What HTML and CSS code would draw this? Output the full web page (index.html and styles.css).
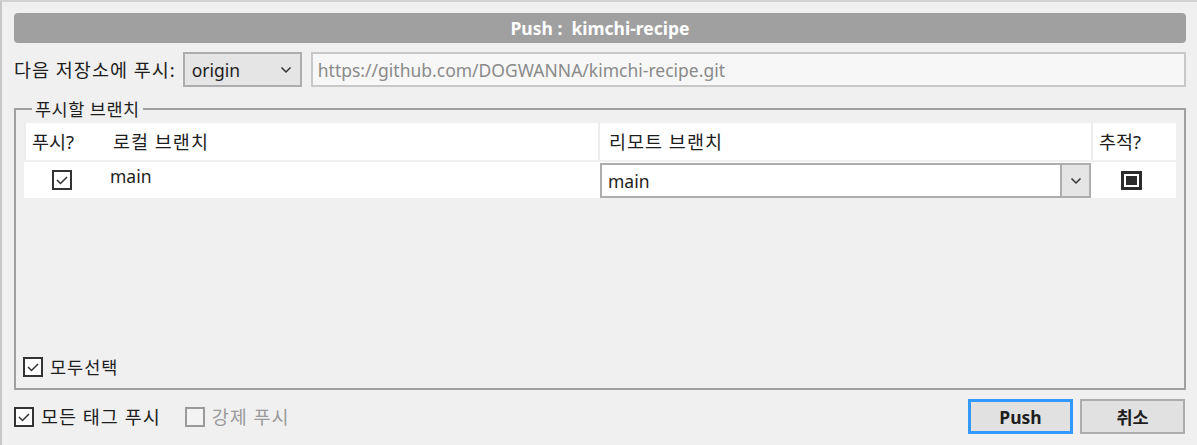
FILE: index.html
```html
<!DOCTYPE html>
<html lang="ko">
<head>
<meta charset="utf-8">
<title>Push : kimchi-recipe</title>
<link rel="stylesheet" href="styles.css">
</head>
<body>
<div class="window">
  <div class="title">Push :&nbsp; kimchi-recipe</div>

  <div class="remote-row">
    <span class="label ko">다음 저장소에 푸시:</span>
    <div class="select">
      <span>origin</span>
      <svg class="chev" width="12" height="8" viewBox="0 0 12 8"><polyline points="1.5,1.5 6,6 10.5,1.5" fill="none" stroke="#333" stroke-width="1.5"/></svg>
    </div>
    <div class="url">https://github.com/DOGWANNA/kimchi-recipe.git</div>
  </div>

  <fieldset class="group">
    <legend class="ko legend">푸시할 브랜치</legend>
    <div class="table">
      <div class="thead">
        <div class="th c1 ko">푸시?</div>
        <div class="th c2 ko">로컬 브랜치</div>
        <div class="th c3 ko">리모트 브랜치</div>
        <div class="th c4 ko">추적?</div>
      </div>
      <div class="trow">
        <div class="td c1">
          <span class="cb">
            <svg width="16" height="16" viewBox="0 0 16 16"><polyline points="3,8 6.5,11.5 13,5" fill="none" stroke="#333" stroke-width="1.5"/></svg>
          </span>
        </div>
        <div class="td c2"><span class="local">main</span></div>
        <div class="td c3">
          <div class="combo">
            <span class="combo-text">main</span>
            <span class="combo-btn">
              <svg width="12" height="8" viewBox="0 0 12 8"><polyline points="1.5,1.5 6,6 10.5,1.5" fill="none" stroke="#333" stroke-width="1.5"/></svg>
            </span>
          </div>
        </div>
        <div class="td c4"><span class="cb-ind"><span class="ind-fill"></span></span></div>
      </div>
    </div>
    <label class="check-all">
      <span class="cb">
        <svg width="16" height="16" viewBox="0 0 16 16"><polyline points="3,8 6.5,11.5 13,5" fill="none" stroke="#333" stroke-width="1.5"/></svg>
      </span>
      <span class="ko small">모두선택</span>
    </label>
  </fieldset>

  <div class="footer">
    <div class="options">
      <label class="opt">
        <span class="cb">
          <svg width="16" height="16" viewBox="0 0 16 16"><polyline points="3,8 6.5,11.5 13,5" fill="none" stroke="#333" stroke-width="1.5"/></svg>
        </span>
        <span class="ko">모든 태그 푸시</span>
      </label>
      <label class="opt disabled">
        <span class="cb cb-off"></span>
        <span class="ko">강제 푸시</span>
      </label>
    </div>
    <div class="buttons">
      <button class="btn btn-default">Push</button>
      <button class="btn">취소</button>
    </div>
  </div>
</div>
</body>
</html>
```

FILE: styles.css
```css
* { box-sizing: border-box; }

html, body {
  margin: 0;
  padding: 0;
  background: #f0f0f0;
}

body {
  font-family: "Noto Sans", "Noto Sans CJK KR", sans-serif;
  font-size: 17.5px;
  line-height: 20px;
  color: #1e1e1e;
}

.ko { font-size: 18.5px; letter-spacing: 1px; }
.ko.legend { font-size: 17.5px; letter-spacing: 0.5px; }
.ko.small { font-size: 17.5px; letter-spacing: 1px; }

.window {
  width: 1197px;
  height: 445px;
  border-top: 2px solid #d2d2d2;
  border-left: 2px solid #c8c8c8;
  padding: 11px 11px 0 12px;
  overflow: hidden;
}

.title {
  height: 30px;
  background: #a0a0a0;
  border-radius: 4px;
  color: #fff;
  font-weight: bold;
  font-size: 17.5px;
  line-height: 30px;
  text-align: center;
}

.remote-row {
  margin-top: 9px;
  height: 35px;
  display: flex;
  align-items: center;
}

.label { margin-right: 7px; white-space: nowrap; }

.select {
  width: 119px;
  height: 35px;
  border: 2px solid #adadad;
  background: #e5e5e5;
  display: flex;
  align-items: center;
  justify-content: space-between;
  padding: 0 8px 0 7px;
  margin-right: 9px;
  flex: none;
}

.url {
  flex: 1;
  height: 35px;
  border: 2px solid #c8c8c8;
  background: #f7f7f7;
  color: #8a8a8a;
  display: flex;
  align-items: center;
  padding-left: 5px;
}

.group {
  margin: 12px 0 0 0;
  border: 2px solid #a0a0a0;
  padding: 4px 8px 11px 8px;
  min-width: 0;
}

.group legend {
  padding: 0 3px;
  margin-left: 8px;
  line-height: 20px;
}

.table {
  height: 234px;
  display: flex;
  flex-direction: column;
  gap: 2px;
}

.thead, .trow {
  display: grid;
  grid-template-columns: 76px 498px 493px 84px;
  background: #fff;
}

.thead { height: 37px; }
.trow { height: 36px; }

.th {
  display: flex;
  align-items: center;
  padding-left: 9px;
  border-left: 2px solid #ececec;
}

.th.c1 { padding-left: 6px; letter-spacing: 0; }
.th.c2 { border-left: none; padding-left: 13px; }
.th.c4 { padding-left: 6px; letter-spacing: 0; }

.td { display: flex; align-items: center; }
.td.c1 { justify-content: center; }
.td.c2 { padding-left: 10px; }
.local { position: relative; top: -4px; }
.td.c3 { padding: 1px 0 0 2px; align-items: stretch; }
.td.c4 { justify-content: center; padding-right: 4px; }

.combo {
  flex: 1;
  height: 35px;
  border: 2px solid #adadad;
  background: #fff;
  display: flex;
  align-items: stretch;
}

.combo-text {
  flex: 1;
  display: flex;
  align-items: center;
  padding-left: 6px;
}

.combo-btn {
  width: 29px;
  background: #e5e5e5;
  border-left: 2px solid #adadad;
  display: flex;
  align-items: center;
  justify-content: center;
}

.cb {
  width: 20px;
  height: 20px;
  border: 2px solid #333;
  background: #fff;
  display: inline-flex;
  align-items: center;
  justify-content: center;
  flex: none;
}

.cb-off {
  border-color: #9a9a9a;
  background: #f3f3f3;
}

.cb-ind {
  width: 21px;
  height: 19px;
  border: 3px solid #2b2b2b;
  display: inline-flex;
  align-items: center;
  justify-content: center;
}

.ind-fill {
  width: 11px;
  height: 9px;
  background: #2b2b2b;
}

.check-all {
  display: flex;
  align-items: center;
  gap: 7px;
  margin-left: -1px;
  height: 20px;
}

.footer {
  margin-top: 9px;
  display: flex;
  justify-content: space-between;
  align-items: center;
  height: 35px;
}

.options {
  display: flex;
  align-items: center;
  gap: 24px;
}

.opt {
  display: flex;
  align-items: center;
  gap: 7px;
}

.opt.disabled { color: #9a9a9a; }

.buttons {
  display: flex;
  gap: 7px;
  margin-right: 1px;
}

.btn {
  width: 105px;
  height: 35px;
  border: 2px solid #adadad;
  background: #e1e1e1;
  font-family: "Noto Sans", "Noto Sans CJK KR", sans-serif;
  font-size: 17.5px;
  font-weight: bold;
  color: #1e1e1e;
  padding: 0;
}

.btn-default { border: 3px solid #3399ff; }
```
